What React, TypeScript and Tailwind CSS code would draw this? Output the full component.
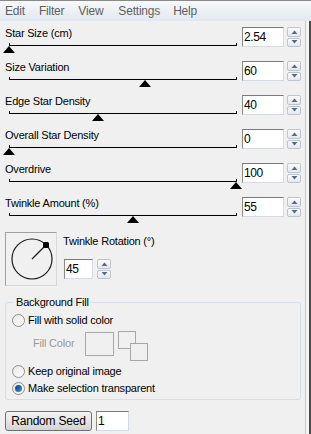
import React from "react";

const FONT = { fontFamily: '"Liberation Sans", Arial, sans-serif' };

function Spinner() {
  return (
    <div className="flex flex-col w-[14px] h-[20px] gap-[1px]">
      {[0, 1].map((i) => (
        <div
          key={i}
          className="flex-1 flex items-center justify-center rounded-[2px] border border-[#bcc4cf] bg-gradient-to-b from-[#fbfcfd] to-[#e3e8ee]"
        >
          <svg width="7" height="4" viewBox="0 0 7 4">
            {i === 0 ? (
              <polygon points="0.5,4 6.5,4 3.5,0.5" fill="#5b6a82" />
            ) : (
              <polygon points="0.5,0 6.5,0 3.5,3.5" fill="#5b6a82" />
            )}
          </svg>
        </div>
      ))}
    </div>
  );
}

function TextBox({ value, w }: { value: string; w: string }) {
  return (
    <div
      className={`${w} h-[20px] bg-white border border-t-[#7a7a7a] border-l-[#8a8a8a] border-r-[#d6dbe1] border-b-[#d6dbe1] pl-[1px] text-[12px] leading-[18px] text-black tracking-[-0.4px]`}
    >
      {value}
    </div>
  );
}

function SliderRow({ label, value, frac }: { label: string; value: string; frac: number }) {
  const center = 9 + frac * 227;
  return (
    <div className="flex h-[34px]">
      <div className="relative w-[242px]">
        <div className="pl-[5px] text-[11px] leading-[13px] text-black tracking-[-0.2px]">{label}</div>
        <div className="absolute left-[9px] top-[16px] w-[228px] h-[3px] border-x border-b border-black" />
        <svg
          className="absolute top-[19px]"
          style={{ left: center - 6 }}
          width="12"
          height="7"
          viewBox="0 0 12 7"
        >
          <polygon points="6,0 12,7 0,7" fill="#000" />
        </svg>
      </div>
      <TextBox value={value} w="w-[42px]" />
      <div className="ml-[3px]">
        <Spinner />
      </div>
    </div>
  );
}

function Radio({ checked, label }: { checked?: boolean; label: string }) {
  return (
    <div className="flex items-center h-[17px]">
      <div className="w-[13px] h-[13px] rounded-full border border-[#8e8f8f] bg-gradient-to-br from-[#e6e6e6] to-[#ffffff] flex items-center justify-center">
        {checked && (
          <div className="w-[7px] h-[7px] rounded-full bg-gradient-to-br from-[#0d3a6e] to-[#3e9ad6]" />
        )}
      </div>
      <span className="ml-[3px] text-[11px] leading-[13px] tracking-[-0.2px] text-black">{label}</span>
    </div>
  );
}

export default function App() {
  return (
    <div className="w-[311px] h-[434px] bg-[#f0f0f0] flex flex-col overflow-hidden" style={FONT}>
      <div className="h-[21px] border-t border-[#8a8a8a] bg-gradient-to-b from-[#f7f9fb] to-[#e2e8f0] flex items-center text-[12px] text-[#5f5f5f] tracking-[-0.2px]">
        <span className="ml-[5px]">Edit</span>
        <span className="ml-[14px]">Filter</span>
        <span className="ml-[14px]">View</span>
        <span className="ml-[15px]">Settings</span>
        <span className="ml-[13px]">Help</span>
      </div>
      <div className="flex flex-1">
        <div className="w-[305px] flex flex-col pt-[6px]">
          <SliderRow label="Star Size (cm)" value="2.54" frac={0} />
          <SliderRow label="Size Variation" value="60" frac={0.6} />
          <SliderRow label="Edge Star Density" value="40" frac={0.39} />
          <SliderRow label="Overall Star Density" value="0" frac={0} />
          <SliderRow label="Overdrive" value="100" frac={1} />
          <SliderRow label="Twinkle Amount (%)" value="55" frac={0.546} />

          <div className="flex mt-[1px] ml-[5px]">
            <div className="w-[52px] h-[54px] border border-t-[#a0a0a0] border-l-[#a0a0a0] border-r-[#d8d8d8] border-b-[#d8d8d8] bg-[#f0f0f0]">
              <svg width="50" height="52" viewBox="0 0 50 52">
                <circle cx="26" cy="26" r="20" fill="none" stroke="#1a1a1a" strokeWidth="1.2" />
                <line x1="26" y1="26" x2="40" y2="12" stroke="#1a1a1a" strokeWidth="1.2" />
                <rect x="37" y="9" width="6" height="6" rx="1.5" fill="#000" />
              </svg>
            </div>
            <div className="ml-[6px] flex flex-col">
              <div className="mt-[3px] text-[11px] leading-[13px] tracking-[-0.2px] text-black">
                Twinkle Rotation (°)
              </div>
              <div className="flex mt-[11px] ml-[1px]">
                <TextBox value="45" w="w-[29px]" />
                <div className="ml-[4px]">
                  <Spinner />
                </div>
              </div>
            </div>
          </div>

          <fieldset className="ml-[5px] mt-[10px] w-[296px] h-[104px] border border-[#d5dfe5] rounded-[3px] px-[6px]">
            <legend className="ml-[2px] px-[2px] text-[11px] leading-[13px] tracking-[-0.2px] text-black">
              Background Fill
            </legend>
            <div className="mt-[3px]">
              <Radio label="Fill with solid color" />
            </div>
            <div className="flex items-start mt-[2px]">
              <span className="ml-[21px] mt-[6px] text-[11px] leading-[13px] tracking-[-0.2px] text-[#9a9a9a]">
                Fill Color
              </span>
              <div className="ml-[11px] mt-[1px] w-[29px] h-[24px] border border-[#a8a8a8]" />
              <div className="relative ml-[4px] w-[31px] h-[31px]">
                <div className="absolute left-0 top-0 w-[18px] h-[18px] border border-[#a8a8a8]" />
                <div className="absolute left-[12px] top-[12px] w-[18px] h-[18px] border border-[#a8a8a8] bg-[#f0f0f0]" />
              </div>
            </div>
            <div className="mt-[1px]">
              <Radio label="Keep original image" />
              <Radio label="Make selection transparent" checked />
            </div>
          </fieldset>

          <div className="flex items-center ml-[5px] mt-[11px]">
            <div className="w-[87px] h-[20px] rounded-[3px] border border-[#707070] bg-gradient-to-b from-[#f3f3f3] via-[#e6e6e6] to-[#d3d3d3] flex items-center justify-center text-[12px] text-black tracking-[-0.2px]">
              Random Seed
            </div>
            <div className="ml-[4px]">
              <TextBox value="1" w="w-[33px]" />
            </div>
          </div>
        </div>
        <div className="w-[6px] border-l border-[#c9c9c9] bg-[#f4f4f4] border-r-2 border-r-[#4b4b4b]" />
      </div>
    </div>
  );
}
